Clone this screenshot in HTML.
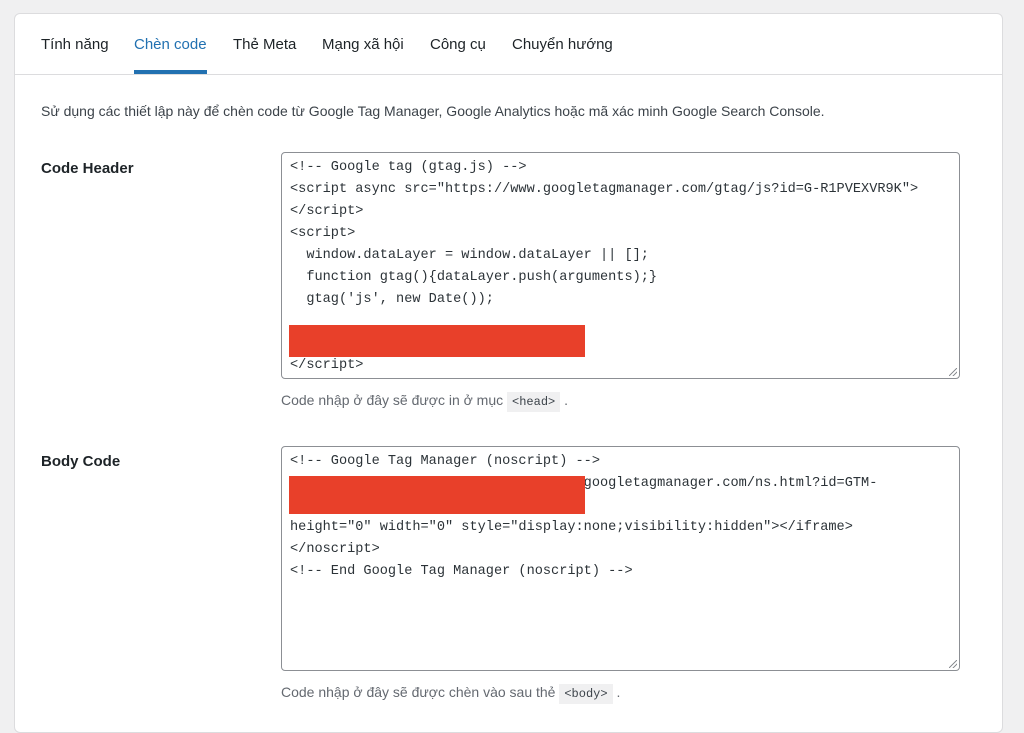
<!DOCTYPE html>
<html><head><meta charset="utf-8"><style>
body{margin:0;background:#f0f0f1;font-family:"Liberation Sans",sans-serif;color:#1d2327;width:1024px;height:716px;overflow:hidden;position:relative}
.card{position:absolute;left:14px;top:13px;width:989px;height:720px;background:#fff;border:1px solid #dcdcde;border-radius:6px;box-sizing:border-box}
.tabs{position:absolute;left:0;top:0;width:100%;height:60px;border-bottom:1px solid #dcdcde}
.tab{position:absolute;top:22px;font-size:15px;color:#1d2327}
.tab.a{color:#2271b1}
.ul{position:absolute;left:119px;top:56px;width:73px;height:4px;background:#2271b1}
.t{position:absolute;font-size:14px;color:#3c434a;white-space:nowrap}
.lbl{position:absolute;font-size:15px;font-weight:bold;color:#1d2327}
.ta{position:absolute;left:281px;width:679px;border:1px solid #8c8f94;border-radius:4px;box-sizing:border-box;background:#fff}
.code{position:absolute;left:8px;font-family:"Liberation Mono",monospace;font-size:13.6px;line-height:22px;white-space:pre;color:#2c3338}
.red{position:absolute;background:#e8402a}
.help{position:absolute;left:281px;font-size:14px;color:#646970}
.help code{font-family:"Liberation Mono",monospace;font-size:12px;background:#f0f0f1;padding:3px 5px;color:#3c434a}
.grip{position:absolute;right:2px;bottom:2px;width:8px;height:8px;background:linear-gradient(135deg,transparent 45%,#8c8f94 46%,#8c8f94 54%,transparent 55%,transparent 70%,#8c8f94 71%,#8c8f94 79%,transparent 80%)}
</style></head><body>
<div class="card">
<div class="tabs">
<span class="tab" style="left:26px">Tính năng</span>
<span class="tab a" style="left:119px">Chèn code</span>
<span class="tab" style="left:218px">Thẻ Meta</span>
<span class="tab" style="left:307px">Mạng xã hội</span>
<span class="tab" style="left:415px">Công cụ</span>
<span class="tab" style="left:497px">Chuyển hướng</span>
<div class="ul"></div>
</div>
</div>
<div class="t" style="left:41px;top:103px">Sử dụng các thiết lập này để chèn code từ Google Tag Manager, Google Analytics hoặc mã xác minh Google Search Console.</div>
<div class="lbl" style="left:41px;top:160px">Code Header</div>
<div class="ta" style="top:152px;height:227px">
<div class="code" style="top:4px">&lt;!-- Google tag (gtag.js) --&gt;
&lt;script async src="https://www.googletagmanager.com/gtag/js?id=G-R1PVEXVR9K"&gt;
&lt;/script&gt;
&lt;script&gt;
  window.dataLayer = window.dataLayer || [];
  function gtag(){dataLayer.push(arguments);}
  gtag('js', new Date());


&lt;/script&gt;</div>
<div class="red" style="left:7px;top:172px;width:296px;height:32px"></div>
<div class="grip"></div>
</div>
<div class="help" style="top:392px">Code nhập ở đây sẽ được in ở mục <code>&lt;head&gt;</code> .</div>
<div class="lbl" style="left:41px;top:453px">Body Code</div>
<div class="ta" style="top:446px;height:225px">
<div class="code" style="top:4px">&lt;!-- Google Tag Manager (noscript) --&gt;
                                    googletagmanager.com/ns.html?id=GTM-

height="0" width="0" style="display:none;visibility:hidden"&gt;&lt;/iframe&gt;
&lt;/noscript&gt;
&lt;!-- End Google Tag Manager (noscript) --&gt;</div>
<div class="red" style="left:7px;top:29px;width:296px;height:38px"></div>
<div class="grip"></div>
</div>
<div class="help" style="top:684px">Code nhập ở đây sẽ được chèn vào sau thẻ <code>&lt;body&gt;</code> .</div>
</body></html>
